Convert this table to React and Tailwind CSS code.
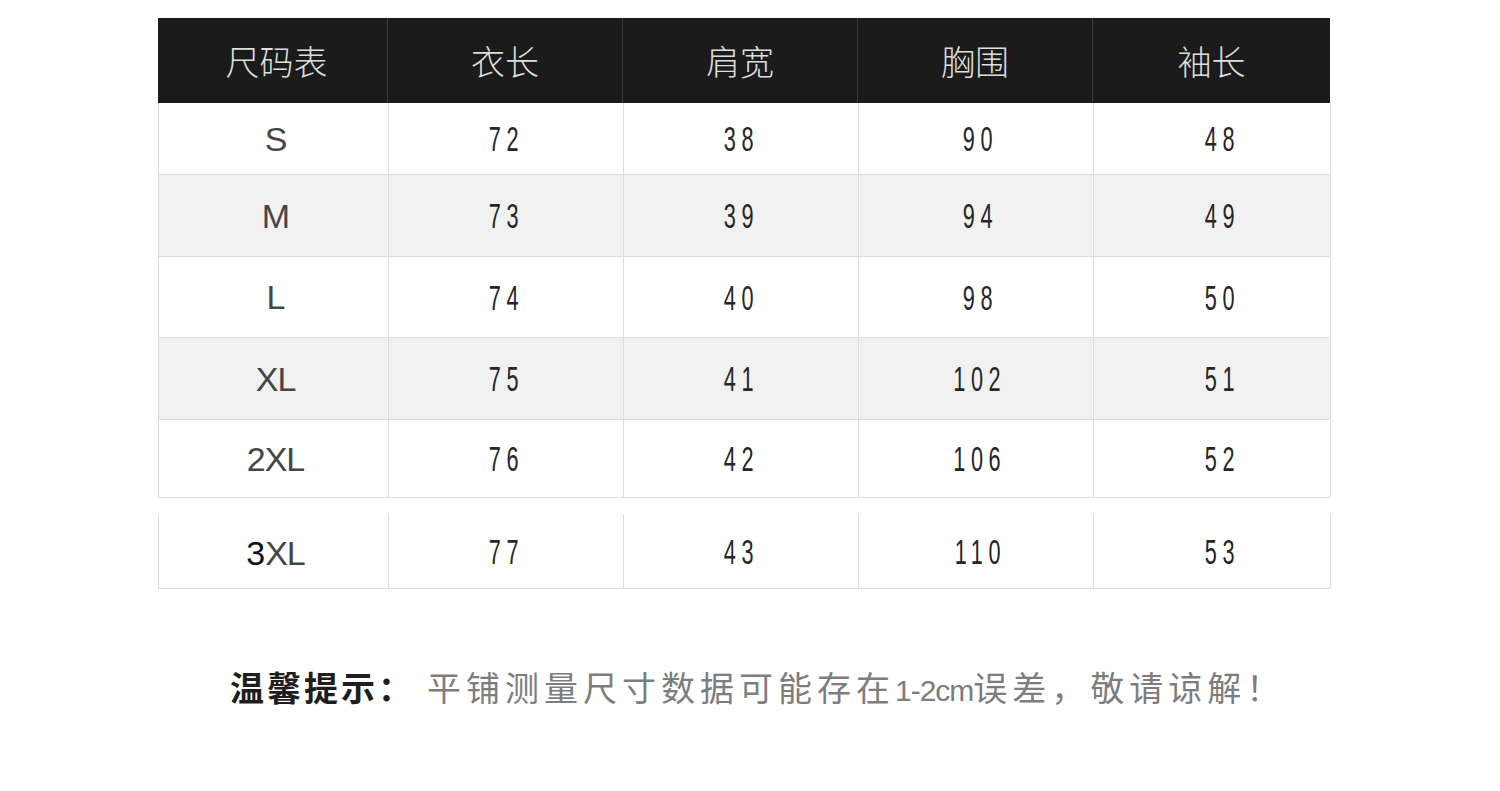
const cols = "grid grid-cols-[230px_235px_235px_235px_237px]";

const headers = ["尺码表", "衣长", "肩宽", "胸围", "袖长"];

const rows = [
  { size: "S", vals: ["72", "38", "90", "48"], h: "h-[72px]", bg: "bg-white" },
  { size: "M", vals: ["73", "39", "94", "49"], h: "h-[82px]", bg: "bg-[#f1f1f1]" },
  { size: "L", vals: ["74", "40", "98", "50"], h: "h-[81px]", bg: "bg-white" },
  { size: "XL", vals: ["75", "41", "102", "51"], h: "h-[82px]", bg: "bg-[#f1f1f1]" },
  { size: "2XL", vals: ["76", "42", "106", "52"], h: "h-[78px]", bg: "bg-white" },
];

function Num({ children }) {
  return (
    <span className="inline-block scale-x-[0.62] text-[35px] tracking-[9px] text-[#262626] font-['Liberation_Sans',sans-serif] leading-none">
      {children}
    </span>
  );
}

function SizeLabel({ children }) {
  return (
    <span className="text-[34px] text-[#454545] font-['Liberation_Sans',sans-serif] leading-none tracking-[-1px]">
      {children}
    </span>
  );
}

function Row({ row, className = "" }) {
  return (
    <div className={`${cols} ${row.h} ${row.bg} border-l border-b border-[#dcdcdc] ${className}`}>
      <div className="flex items-center justify-center border-r border-[#dcdcdc] pl-1">
        {row.sizeNode || <SizeLabel>{row.size}</SizeLabel>}
      </div>
      {row.vals.map((v, i) => (
        <div
          key={i}
          className={`flex items-center justify-center border-r border-[#dcdcdc] ${i === 3 ? "pl-5" : i === 2 ? "pl-2" : ""}`}
        >
          <Num>{v}</Num>
        </div>
      ))}
    </div>
  );
}

export default function App() {
  const last = {
    size: "3XL",
    sizeNode: (
      <span className="text-[34px] leading-none font-['Liberation_Sans',sans-serif] pt-1">
        <span className="text-[#111]">3</span>
        <span className="text-[#454545] tracking-[-1px]">XL</span>
      </span>
    ),
    vals: ["77", "43", "110", "53"],
    h: "h-[75px]",
    bg: "bg-white",
  };

  return (
    <div className="min-h-screen bg-white pl-[158px] pt-[18px] font-['Noto_Sans_CJK_SC',sans-serif]">
      <div className="w-[1172px]">
        {/* Header */}
        <div className={`${cols} h-[85px] bg-[#1b1b1b]`}>
          {headers.map((h, i) => (
            <div
              key={h}
              className={`flex items-center justify-center text-[34px] font-light text-[#dedede] ${i < 4 ? "border-r border-[#3a3a3a]" : ""} ${i === 0 ? "pl-2" : ""}`}
            >
              {h}
            </div>
          ))}
        </div>

        {rows.map((r) => (
          <Row key={r.size} row={r} />
        ))}

        <Row row={last} className="mt-[16px]" />
      </div>

      {/* Tip */}
      <div className="mt-[78px] pl-[72px] leading-[40px] text-[34px] whitespace-nowrap">
        <span className="font-bold text-[#1e1e1e] tracking-[3px]">温馨提示：</span>
        <span className="ml-[12px] text-[#7d7d7d] tracking-[5px]">
          平铺测量尺寸数据可能存在<span className="font-['Liberation_Sans',sans-serif] tracking-[-1px] text-[30px]">1-2cm</span>误差，敬请谅解！
        </span>
      </div>
    </div>
  );
}
